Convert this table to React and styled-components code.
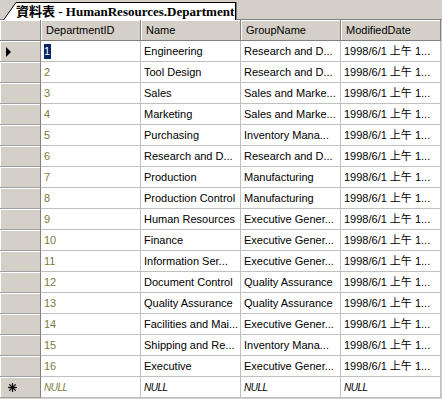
import React from 'react';
import styled, { createGlobalStyle } from 'styled-components';

const Global = createGlobalStyle`
  html, body { margin: 0; padding: 0; background: #d4d0c8; }
  body { font-family: "Liberation Sans", Arial, "Noto Sans CJK TC", sans-serif; font-size: 11px; }
`;

const Page = styled.div`
  width: 442px;
  height: 399px;
  display: flex;
  flex-direction: column;
  background: #d4d0c8;
  overflow: hidden;
`;

const TabStrip = styled.div`
  flex: 0 0 20px;
  height: 20px;
  box-sizing: border-box;
  display: flex;
  align-items: flex-end;
  padding-left: 3px;
  border-bottom: 1px solid #808080;
`;

const Tab = styled.div`
  display: flex;
  align-items: stretch;
  height: 18px;
  margin-bottom: -1px;
`;

const TabLabel = styled.div`
  background: #fff;
  border-top: 1px solid #000;
  border-right: 1px solid #000;
  box-shadow: 1px 0 0 #808080;
  padding: 0 1px 0 0;
  font-family: "Liberation Serif", "Noto Sans CJK TC", serif;
  font-weight: bold;
  font-size: 13px;
  line-height: 17px;
  color: #000;
  white-space: nowrap;
`;

const Grid = styled.div`
  display: grid;
  grid-template-columns: 41px repeat(4, 100px);
  grid-auto-rows: 21px;
  background: #fff;
  width: 441px;
`;

const HeadCell = styled.div`
  box-sizing: border-box;
  background: #d4d0c8;
  border-right: 1px solid #808080;
  border-bottom: 1px solid #808080;
  box-shadow: inset 1px 1px 0 #fff;
  padding-left: 5px;
  line-height: 21px;
  color: #000;
  white-space: nowrap;
  overflow: hidden;
`;

const RowHead = styled.div`
  box-sizing: border-box;
  background: #d4d0c8;
  border-right: 1px solid #808080;
  border-bottom: 1px solid #a0a0a0;
  box-shadow: inset 1px 1px 0 #fff;
  display: flex;
  align-items: center;
  padding-left: ${p => p.$pad}px;
  padding-top: 1px;
`;

const Cell = styled.div`
  box-sizing: border-box;
  background: #fff;
  border-right: 1px solid #c0c0c0;
  border-bottom: 1px solid #c0c0c0;
  padding-left: 3px;
  line-height: 21px;
  color: ${p => (p.$olive ? '#7b7b3c' : '#000')};
  font-style: ${p => (p.$null ? 'italic' : 'normal')};
  font-size: ${p => (p.$null ? '10px' : '11px')};
  letter-spacing: ${p => (p.$null ? '-0.5px' : '0')};
  white-space: nowrap;
  overflow: hidden;
`;

const Selected = styled.span`
  background: #0a246a;
  color: #fff;
  padding: 1px 1px 2px 0;
`;

const Arrow = () => (
  <svg width="6" height="10" viewBox="0 0 6 10">
    <polygon points="0,0 5,5 0,10" fill="#000" />
  </svg>
);

const Star = () => (
  <svg width="9" height="9" viewBox="0 0 9 9">
    <g stroke="#000" strokeWidth="1.2">
      <line x1="4.5" y1="0" x2="4.5" y2="9" />
      <line x1="0" y1="4.5" x2="9" y2="4.5" />
      <line x1="1.3" y1="1.3" x2="7.7" y2="7.7" />
      <line x1="7.7" y1="1.3" x2="1.3" y2="7.7" />
    </g>
  </svg>
);

const Slant = () => (
  <svg width="13" height="18" viewBox="0 0 13 18">
    <polygon points="0,18 13,0.5 13,18" fill="#fff" />
    <line x1="0.5" y1="18" x2="13" y2="0.5" stroke="#000" strokeWidth="1" />
  </svg>
);

const DATE = '1998/6/1 上午 1...';

const rows = [
  [1, 'Engineering', 'Research and D...'],
  [2, 'Tool Design', 'Research and D...'],
  [3, 'Sales', 'Sales and Marke...'],
  [4, 'Marketing', 'Sales and Marke...'],
  [5, 'Purchasing', 'Inventory Mana...'],
  [6, 'Research and D...', 'Research and D...'],
  [7, 'Production', 'Manufacturing'],
  [8, 'Production Control', 'Manufacturing'],
  [9, 'Human Resources', 'Executive Gener...'],
  [10, 'Finance', 'Executive Gener...'],
  [11, 'Information Ser...', 'Executive Gener...'],
  [12, 'Document Control', 'Quality Assurance'],
  [13, 'Quality Assurance', 'Quality Assurance'],
  [14, 'Facilities and Mai...', 'Executive Gener...'],
  [15, 'Shipping and Re...', 'Inventory Mana...'],
  [16, 'Executive', 'Executive Gener...'],
];

export default function App() {
  return (
    <Page>
      <Global />
      <TabStrip>
        <Tab>
          <Slant />
          <TabLabel>資料表 - HumanResources.Department</TabLabel>
        </Tab>
      </TabStrip>
      <Grid>
        <HeadCell />
        <HeadCell>DepartmentID</HeadCell>
        <HeadCell>Name</HeadCell>
        <HeadCell>GroupName</HeadCell>
        <HeadCell>ModifiedDate</HeadCell>
        {rows.map(([id, name, group], i) => (
          <React.Fragment key={id}>
            <RowHead $pad={6}>{i === 0 ? <Arrow /> : null}</RowHead>
            <Cell $olive>{i === 0 ? <Selected>{id}</Selected> : id}</Cell>
            <Cell>{name}</Cell>
            <Cell>{group}</Cell>
            <Cell>{DATE}</Cell>
          </React.Fragment>
        ))}
        <RowHead $pad={8}><Star /></RowHead>
        <Cell $olive $null>NULL</Cell>
        <Cell $null>NULL</Cell>
        <Cell $null>NULL</Cell>
        <Cell $null>NULL</Cell>
      </Grid>
    </Page>
  );
}
